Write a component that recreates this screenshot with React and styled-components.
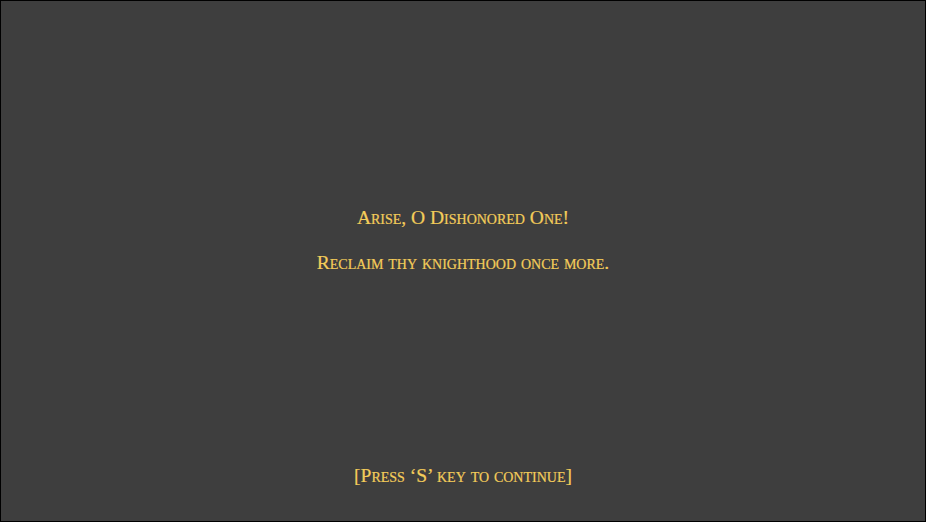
import React from "react";
import styled, { createGlobalStyle } from "styled-components";

const Global = createGlobalStyle`
  html, body {
    margin: 0;
    padding: 0;
    background: #3e3e3e;
  }
  * {
    box-sizing: border-box;
  }
`;

export default function App() {
  return (
    <>
      <Global />
      <Screen>
        <Message>
          <Line>Arise, O Dishonored One!</Line>
          <Line>Reclaim thy knighthood once more.</Line>
        </Message>
        <Prompt>[Press ‘S’ key to continue]</Prompt>
      </Screen>
    </>
  );
}

const Screen = styled.div`
  width: 926px;
  height: 522px;
  border: 1px solid #000;
  background-color: #3e3e3e;
  display: flex;
  flex-direction: column;
  align-items: center;
  padding-top: 205px;
  padding-bottom: 34px;
  font-family: "Liberation Serif", "Times New Roman", serif;
  font-variant: small-caps;
  color: #f4cd5a;
`;

const Message = styled.div`
  display: flex;
  flex-direction: column;
  align-items: center;
  gap: 22px;
  flex: 1;
`;

const Line = styled.p`
  margin: 0;
  font-size: 19.5px;
  line-height: 23px;
  -webkit-text-stroke: 0.2px #f4cd5a;
`;

const Prompt = styled.div`
  font-size: 19.5px;
  line-height: 23px;
  -webkit-text-stroke: 0.2px #f4cd5a;
`;
